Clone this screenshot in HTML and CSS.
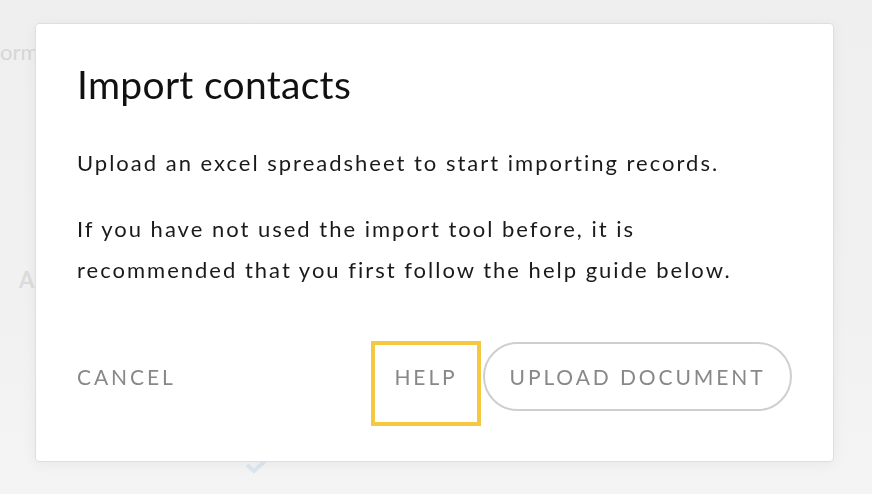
FILE: index.html
```html
<!DOCTYPE html>
<html>
<head>
<meta charset="utf-8">
<link rel="stylesheet" href="styles.css">
</head>
<body>
<div class="page">
  <div class="bg-title">ormation</div>
  <div class="bg-label">A</div>
  <div class="bg-check">
    <svg width="26" height="18" viewBox="0 0 26 18"><path d="M3 9 L10 15 L23 3" fill="none" stroke="#dbe6f0" stroke-width="4"/></svg>
  </div>
</div>
<div class="overlay">
  <div class="dialog">
    <h1 class="title">Import contacts</h1>
    <p class="text">Upload an excel spreadsheet to start importing records.</p>
    <p class="text">If you have not used the import tool before, it is recommended that you first follow the help guide below.</p>
    <div class="actions">
      <button class="btn btn-cancel">CANCEL</button>
      <div class="spacer"></div>
      <button class="btn btn-help">HELP</button>
      <button class="btn btn-upload">UPLOAD DOCUMENT</button>
    </div>
  </div>
</div>
</body>
</html>
```

FILE: styles.css
```css
html, body {
  margin: 0;
  height: 100%;
}
body {
  background: linear-gradient(180deg, #efefef 0%, #f1f1f1 60%, #f4f4f4 100%);
  font-family: "Lato", "Noto Sans", sans-serif;
  overflow: hidden;
}
.page {
  position: relative;
  height: 100%;
}
.bg-title {
  position: absolute;
  left: 0;
  top: 38px;
  font-size: 22px;
  color: #d6d6d6;
}
.bg-label {
  position: absolute;
  left: 19px;
  top: 266px;
  font-size: 22px;
  font-weight: 700;
  color: #dcdcdc;
}
.bg-check {
  position: absolute;
  left: 244px;
  top: 456px;
}
.overlay {
  position: fixed;
  inset: 0;
  padding: 23px 0 0 35px;
}
.dialog {
  box-sizing: border-box;
  width: 799px;
  height: 439px;
  background: #fff;
  border: 1px solid #dedede;
  border-radius: 4px;
  box-shadow: 0 2px 14px rgba(0,0,0,0.05);
  padding: 36px 41px 0 41px;
  display: flex;
  flex-direction: column;
}
.title {
  margin: 0 0 34px 0;
  font-weight: 400;
  font-size: 39px;
  line-height: 48px;
  color: #111;
  letter-spacing: 0.3px;
}
.text {
  margin: 0 0 25px 0;
  font-size: 22px;
  line-height: 41px;
  color: #1a1a1a;
  letter-spacing: 2px;
}
.actions {
  display: flex;
  align-items: flex-start;
  margin-top: 26px;
}
.spacer { flex: 1; }
.btn {
  font-family: inherit;
  background: none;
  border: none;
  color: #888;
  font-size: 21px;
  letter-spacing: 2.9px;
  padding: 0;
  cursor: pointer;
}
.btn-cancel {
  height: 68px;
  margin-top: 1px;
}
.btn-help {
  box-sizing: border-box;
  width: 110px;
  height: 85px;
  border: 4px solid #f5c842;
  padding-bottom: 15px;
  margin-right: 2px;
}
.btn-upload {
  box-sizing: border-box;
  width: 309px;
  height: 69px;
  margin-top: 1px;
  border: 2px solid #cfcfcf;
  border-radius: 35px;
}
```
